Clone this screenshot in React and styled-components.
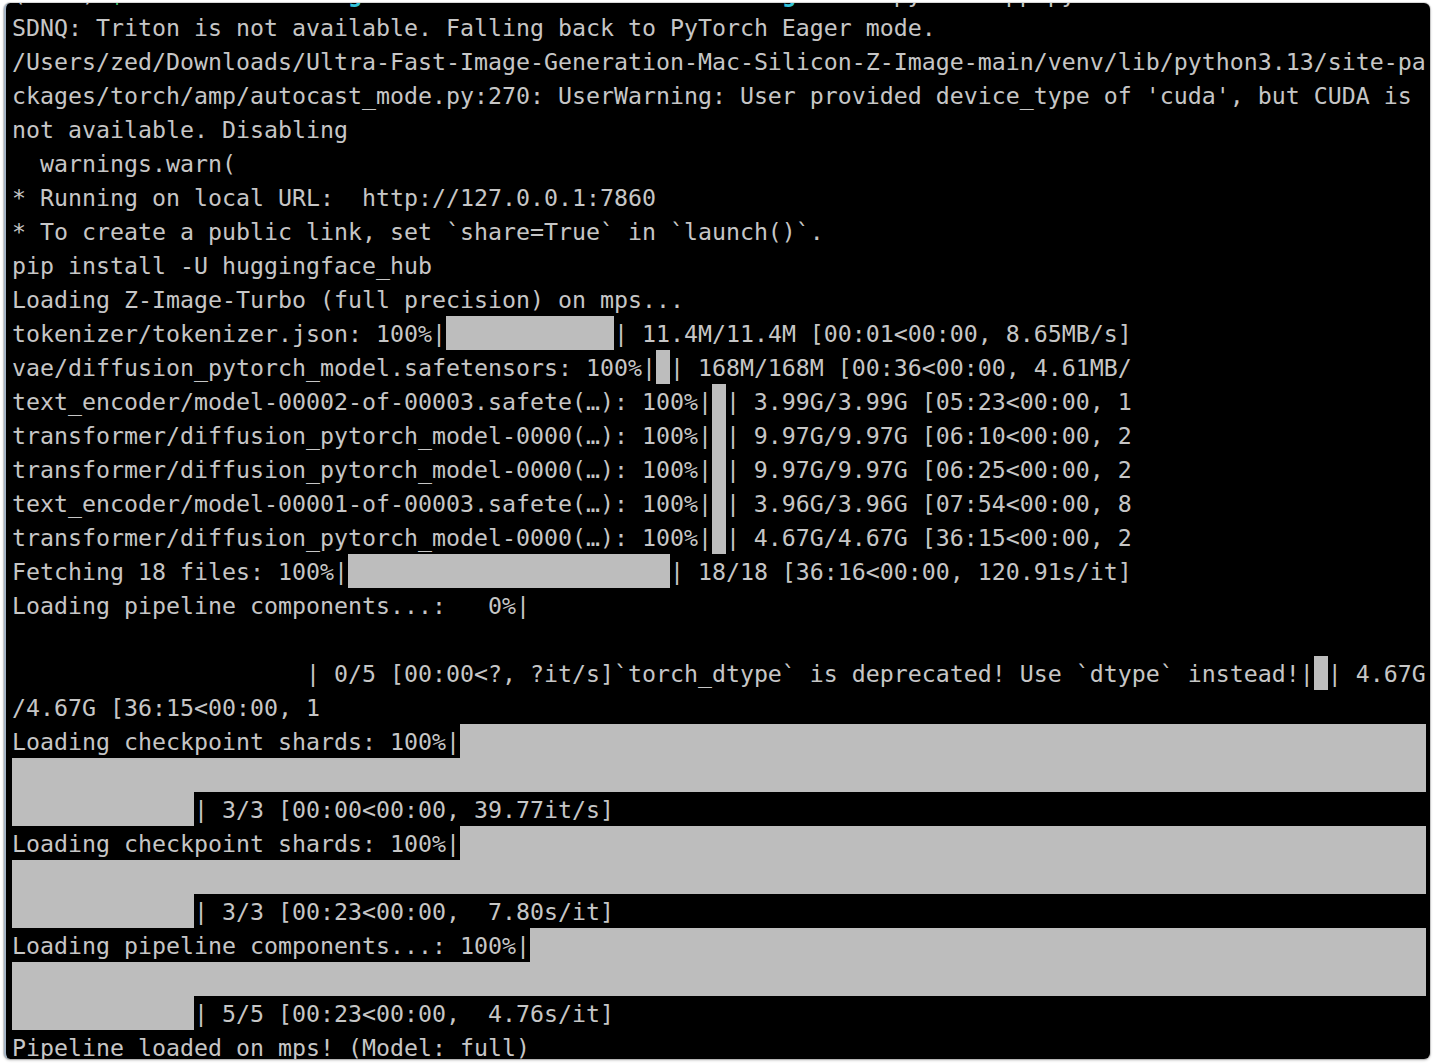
import React from "react";
import styled, { createGlobalStyle } from "styled-components";

const TextColor = "#c6c6c6";
const BarColor = "#bdbdbd";
const Cyan = "#33c4da";

const GlobalStyle = createGlobalStyle`
  html, body {
    margin: 0;
    padding: 0;
    background: #ffffff;
  }
  body {
    width: 1434px;
    height: 1064px;
    overflow: hidden;
  }
`;

const Window = styled.div`
  margin: 3px 4px 0 4px;
  height: 1056px;
  background: #000000;
  border-left: 2px solid #a4b4c6;
  border-radius: 6px;
  box-shadow: 0 0 0 1px rgba(0, 0, 0, 0.12), 0 1px 3px rgba(0, 0, 0, 0.3);
  overflow: hidden;
`;

const Screen = styled.div`
  margin-top: -27px;
  padding-left: 6px;
  font-family: "DejaVu Sans Mono", "Liberation Mono", monospace;
  font-size: 23.26px;
  color: ${TextColor};
`;

const Line = styled.div`
  height: 34px;
  line-height: 36px;
  white-space: pre;
`;

const Bar = styled.span`
  display: inline-block;
  vertical-align: top;
  height: 34px;
  width: ${(p) => p.$cells}ch;
  background: ${BarColor};
`;

const Dir = styled.span`
  color: ${Cyan};
  font-weight: bold;
`;

const Arrow = styled.span`
  color: #3fc56b;
  font-weight: bold;
`;

const done = "100%|";

// each line is a list of parts: a string, or { bar: n } for n block cells
const lines = [
  ["SDNQ: Triton is not available. Falling back to PyTorch Eager mode."],
  ["/Users/zed/Downloads/Ultra-Fast-Image-Generation-Mac-Silicon-Z-Image-main/venv/lib/python3.13/site-pa"],
  ["ckages/torch/amp/autocast_mode.py:270: UserWarning: User provided device_type of 'cuda', but CUDA is"],
  ["not available. Disabling"],
  ["  warnings.warn("],
  ["* Running on local URL:  http://127.0.0.1:7860"],
  ["* To create a public link, set `share=True` in `launch()`."],
  ["pip install -U huggingface_hub"],
  ["Loading Z-Image-Turbo (full precision) on mps..."],
  ["tokenizer/tokenizer.json: " + done, { bar: 12 }, "| 11.4M/11.4M [00:01<00:00, 8.65MB/s]"],
  ["vae/diffusion_pytorch_model.safetensors: " + done, { bar: 1 }, "| 168M/168M [00:36<00:00, 4.61MB/"],
  ["text_encoder/model-00002-of-00003.safete(…): " + done, { bar: 1 }, "| 3.99G/3.99G [05:23<00:00, 1"],
  ["transformer/diffusion_pytorch_model-0000(…): " + done, { bar: 1 }, "| 9.97G/9.97G [06:10<00:00, 2"],
  ["transformer/diffusion_pytorch_model-0000(…): " + done, { bar: 1 }, "| 9.97G/9.97G [06:25<00:00, 2"],
  ["text_encoder/model-00001-of-00003.safete(…): " + done, { bar: 1 }, "| 3.96G/3.96G [07:54<00:00, 8"],
  ["transformer/diffusion_pytorch_model-0000(…): " + done, { bar: 1 }, "| 4.67G/4.67G [36:15<00:00, 2"],
  ["Fetching 18 files: " + done, { bar: 23 }, "| 18/18 [36:16<00:00, 120.91s/it]"],
  ["Loading pipeline components...:   0%|"],
  [""],
  [
    " ".repeat(21) + "| 0/5 [00:00<?, ?it/s]`torch_dtype` is deprecated! Use `dtype` instead!|",
    { bar: 1 },
    "| 4.67G",
  ],
  ["/4.67G [36:15<00:00, 1"],
  ["Loading checkpoint shards: " + done, { bar: 69 }],
  [{ bar: 101 }],
  [{ bar: 13 }, "| 3/3 [00:00<00:00, 39.77it/s]"],
  ["Loading checkpoint shards: " + done, { bar: 69 }],
  [{ bar: 101 }],
  [{ bar: 13 }, "| 3/3 [00:23<00:00,  7.80s/it]"],
  ["Loading pipeline components...: " + done, { bar: 64 }],
  [{ bar: 101 }],
  [{ bar: 13 }, "| 5/5 [00:23<00:00,  4.76s/it]"],
  ["Pipeline loaded on mps! (Model: full)"],
];

const App = () => {
  return (
    <>
      <GlobalStyle />
      <Window>
        <Screen>
          {/* prompt line, scrolled mostly out of view */}
          <Line>
            {"(venv) "}
            <Arrow>$</Arrow>
            {"  "}
            <Dir>Ultra-Fast-Image-Generation-Mac-Silicon-Z-Image-main</Dir>
            {" python app.py"}
          </Line>
          {lines.map((parts, i) => (
            <Line key={i}>
              {parts.map((part, j) =>
                typeof part === "string" ? part : <Bar key={j} $cells={part.bar} />
              )}
            </Line>
          ))}
        </Screen>
      </Window>
    </>
  );
};

export default App;
